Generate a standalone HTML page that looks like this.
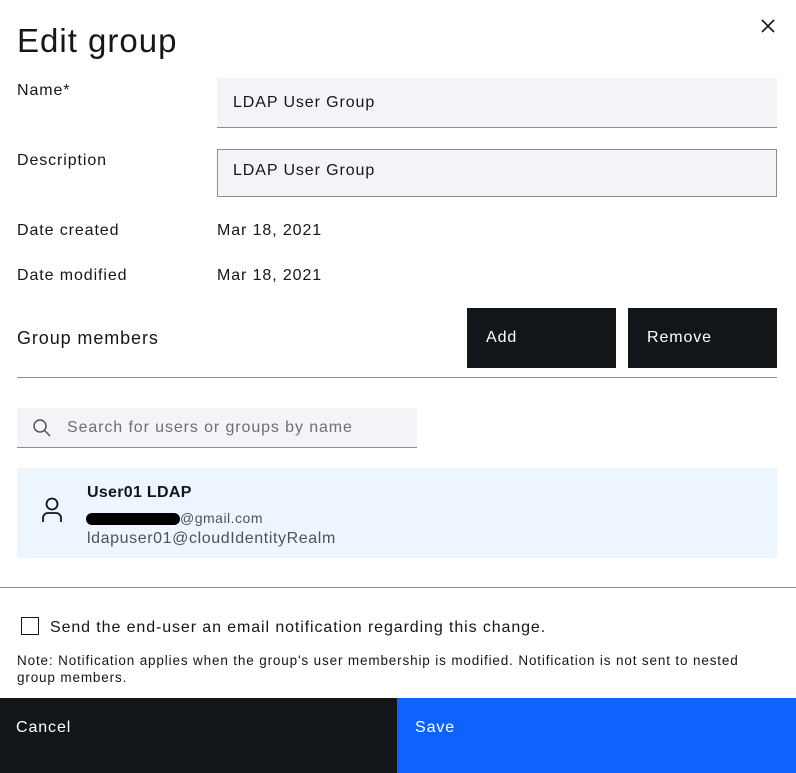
<!DOCTYPE html><html><head><style>
body{margin:0;width:796px;height:773px;background:#fff;font-family:"Liberation Sans",sans-serif;color:#161616;position:relative;overflow:hidden;letter-spacing:0.9px}
.a{position:absolute}
.lbl{font-size:16px;color:#161616}
.inp{background:#f2f4f8;border-bottom:1px solid #8d8d8d;box-sizing:border-box;font-size:16px;padding-left:16px}
</style></head><body>
<div class="a" style="left:17px;top:22px;font-size:33px;letter-spacing:1px">Edit group</div>
<svg class="a" style="left:761px;top:19px" width="14" height="14" viewBox="0 0 14 14"><path d="M1 1L13 13M13 1L1 13" stroke="#161616" stroke-width="1.6"/></svg>
<div class="a lbl" style="left:17px;top:82px">Name*</div>
<div class="a inp" style="left:217px;top:78px;width:560px;height:50px;line-height:50px">LDAP User Group</div>
<div class="a lbl" style="left:17px;top:152px">Description</div>
<div class="a inp" style="left:217px;top:149px;width:560px;height:48px;border:1px solid #8d8d8d;padding-top:12px;padding-left:15px">LDAP User Group</div>
<div class="a lbl" style="left:17px;top:222px">Date created</div>
<div class="a lbl" style="left:217px;top:222px">Mar 18, 2021</div>
<div class="a lbl" style="left:17px;top:267px">Date modified</div>
<div class="a lbl" style="left:217px;top:267px">Mar 18, 2021</div>
<div class="a" style="left:17px;top:328px;font-size:18px">Group members</div>
<div class="a" style="left:467px;top:308px;width:149px;height:60px;background:#121619;color:#fff;font-size:16px;line-height:60px;padding-left:19px;box-sizing:border-box">Add</div>
<div class="a" style="left:628px;top:308px;width:149px;height:60px;background:#121619;color:#fff;font-size:16px;line-height:60px;padding-left:19px;box-sizing:border-box">Remove</div>
<div class="a" style="left:17px;top:377px;width:760px;height:1px;background:#8d8d8d"></div>
<div class="a inp" style="left:17px;top:408px;width:400px;height:40px;line-height:40px;padding-left:50px;color:#6f6f6f">Search for users or groups by name</div>
<svg class="a" style="left:32px;top:418px" width="20" height="20" viewBox="0 0 20 20"><circle cx="8" cy="8" r="6" fill="none" stroke="#525252" stroke-width="1.5"/><line x1="12.5" y1="12.5" x2="18" y2="18" stroke="#525252" stroke-width="1.5"/></svg>
<div class="a" style="left:17px;top:468px;width:760px;height:90px;background:#edf5ff"></div>
<svg class="a" style="left:40px;top:496px" width="24" height="28" viewBox="0 0 24 28"><circle cx="12" cy="8" r="5.5" fill="none" stroke="#161616" stroke-width="1.8"/><path d="M3 26v-4a5 5 0 0 1 5-5h8a5 5 0 0 1 5 5v4" fill="none" stroke="#161616" stroke-width="1.8"/></svg>
<div class="a" style="left:87px;top:484px;font-size:16px;font-weight:bold;letter-spacing:0.3px">User01 LDAP</div>
<div class="a" style="left:86px;top:513px;width:94px;height:12px;background:#000;border-radius:6px"></div>
<div class="a" style="left:180px;top:510px;font-size:14px;color:#525252;letter-spacing:0.5px">@gmail.com</div>
<div class="a" style="left:87px;top:530px;font-size:16px;color:#525252;letter-spacing:0.6px">ldapuser01@cloudIdentityRealm</div>
<div class="a" style="left:0;top:587px;width:796px;height:1px;background:#8d8d8d"></div>
<div class="a" style="left:21px;top:617px;width:16px;height:16px;border:1px solid #161616"></div>
<div class="a" style="left:50px;top:619px;font-size:16px">Send the end-user an email notification regarding this change.</div>
<div class="a" style="left:17px;top:652px;width:780px;font-size:13.5px;line-height:17px;letter-spacing:0.85px;white-space:nowrap">Note: Notification applies when the group's user membership is modified. Notification is not sent to nested<br>group members.</div>
<div class="a" style="left:0;top:698px;width:397px;height:75px;background:#121619;color:#fff;font-size:16px;padding:21px 16px;box-sizing:border-box">Cancel</div>
<div class="a" style="left:397px;top:698px;width:399px;height:75px;background:#0f62fe;color:#fff;font-size:16px;padding:21px 18px;box-sizing:border-box">Save</div>
</body></html>
